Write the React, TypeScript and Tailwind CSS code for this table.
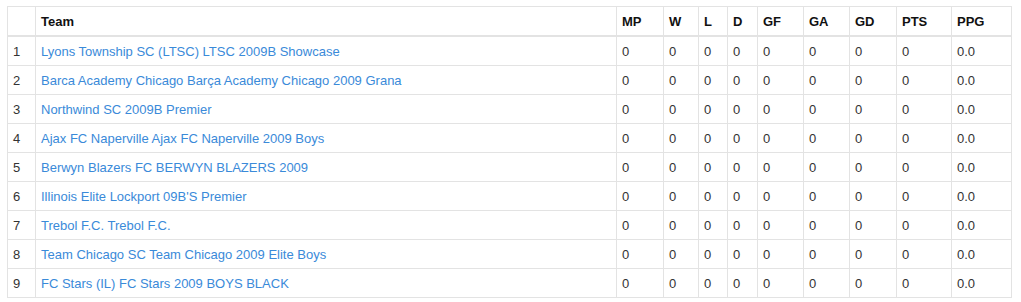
import React from "react";

const teams = [
  "Lyons Township SC (LTSC) LTSC 2009B Showcase",
  "Barca Academy Chicago Barça Academy Chicago 2009 Grana",
  "Northwind SC 2009B Premier",
  "Ajax FC Naperville Ajax FC Naperville 2009 Boys",
  "Berwyn Blazers FC BERWYN BLAZERS 2009",
  "Illinois Elite Lockport 09B'S Premier",
  "Trebol F.C. Trebol F.C.",
  "Team Chicago SC Team Chicago 2009 Elite Boys",
  "FC Stars (IL) FC Stars 2009 BOYS BLACK",
];

const cols = ["MP", "W", "L", "D", "GF", "GA", "GD", "PTS", "PPG"];
const widths = [28, 581, 47, 35, 29, 30, 46, 46, 47, 55, 60];

export default function App() {
  return (
    <div
      className="bg-white pl-[7px] pt-[6px]"
      style={{ fontFamily: '"Liberation Sans", Arial, sans-serif' }}
    >
      <table className="table-fixed border-collapse w-[1005px] text-[13px] leading-[18px] text-[#333]">
        <colgroup>
          {widths.map((w, i) => (
            <col key={i} style={{ width: w }} />
          ))}
        </colgroup>
        <thead>
          <tr>
            <th className="border border-[#e3e3e3] border-b-2 px-[5px] pt-[6px] pb-[4px] text-left font-bold text-[#111]"></th>
            <th className="border border-[#e3e3e3] border-b-2 px-[5px] pt-[6px] pb-[4px] text-left font-bold text-[#111]">Team</th>
            {cols.map((c) => (
              <th key={c} className="border border-[#e3e3e3] border-b-2 px-[5px] pt-[6px] pb-[4px] text-left font-bold text-[#111]">
                {c}
              </th>
            ))}
          </tr>
        </thead>
        <tbody>
          {teams.map((t, i) => (
            <tr key={i}>
              <td className="border border-[#e3e3e3] px-[5px] pt-[6px] pb-[4px]">{i + 1}</td>
              <td className="border border-[#e3e3e3] px-[5px] pt-[6px] pb-[4px]">
                <a className="text-[#3a8ad9]" href="#">{t}</a>
              </td>
              {cols.map((c) => (
                <td key={c} className="border border-[#e3e3e3] px-[5px] pt-[6px] pb-[4px]">
                  {c === "PPG" ? "0.0" : "0"}
                </td>
              ))}
            </tr>
          ))}
        </tbody>
      </table>
    </div>
  );
}
